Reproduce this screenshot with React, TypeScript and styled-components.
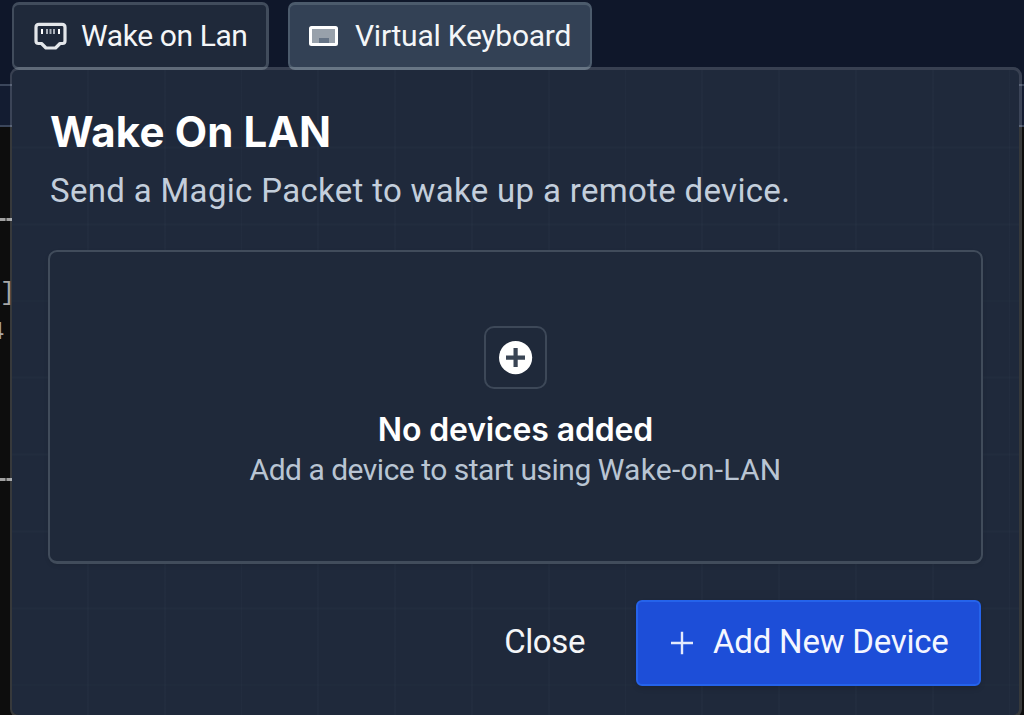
import React from "react";
import styled, { createGlobalStyle } from "styled-components";

const GlobalStyle = createGlobalStyle`
  * { box-sizing: border-box; }
  body { margin: 0; background: #0d0d0d; overflow: hidden; }
`;

const Screen = styled.main`
  position: relative;
  display: flex;
  flex-direction: column;
  width: 1024px;
  height: 715px;
  overflow: hidden;
  font-family: Roboto, "Liberation Sans", sans-serif;
  color: #fff;
`;

const Toolbar = styled.div`
  display: flex;
  align-items: flex-start;
  gap: 19px;
  height: 84px;
  padding: 2px 0 0 12px;
  background: #0f172a;
`;

const Tab = styled.button<{ $active?: boolean; $width: number; $gap: number; $spacing: number }>`
  display: flex;
  align-items: center;
  gap: ${(p) => p.$gap}px;
  width: ${(p) => p.$width}px;
  height: 68px;
  padding: 0 0 0 ${(p) => (p.$active ? 19 : 20)}px;
  border: 3px solid ${(p) => (p.$active ? "#4c5b6c" : "#414c5c")};
  border-width: 3px ${(p) => (p.$active ? 2 : 3)}px 3px 2px;
  border-radius: 7px;
  background: ${(p) => (p.$active ? "#334155" : "#1f293a")};
  color: #f4f6f8;
  font: 400 30px/36px Roboto, sans-serif;
  letter-spacing: ${(p) => p.$spacing}px;
  white-space: nowrap;
`;

const StatusStrip = styled.div`
  height: 43px;
  border: solid #3b465b;
  border-width: 2px 0;
  background: #131c31;
`;

const Terminal = styled.div`
  flex: 1;
  display: flex;
  flex-direction: column;
  padding-top: 91px;
  background: #0d0d0d;
  color: #a8a8a8;
  font-family: "Liberation Mono", monospace;
`;

const Rule = styled.div`
  width: 12px;
  height: 3px;
  background: repeating-linear-gradient(90deg, #a0a0a0 0 5px, #606060 5px 7px);
`;

const Output = styled.div<{ $height: number; $indent: number; $size: number }>`
  width: 12px;
  height: ${(p) => p.$height}px;
  overflow: hidden;
  white-space: nowrap;
  text-indent: ${(p) => p.$indent}px;
  font-size: ${(p) => p.$size}px;
  line-height: ${(p) => p.$height}px;
`;

const OutputBlock = styled.div`
  height: 257px;
  padding-top: 55px;
`;

const Popover = styled.section`
  position: absolute;
  left: 10px;
  top: 67px;
  width: 1012px;
  height: 651px;
  padding: 37px 36px 0 36px;
  border: solid rgba(203, 213, 225, 0.22);
  border-width: 3px 3px 3px 2px;
  border-radius: 9px;
  background:
    repeating-linear-gradient(90deg, transparent 0 75px, rgba(71, 85, 105, 0.07) 75px 76.8px) padding-box,
    repeating-linear-gradient(180deg, transparent 0 75px, rgba(71, 85, 105, 0.07) 75px 76.8px) 0 1.5px padding-box,
    #1f293b padding-box;
`;

const Title = styled.h1`
  margin: 0 0 14px 2px;
  font: 700 42px/50px Inter, sans-serif;
  letter-spacing: 0.15px;
`;

const Subtitle = styled.p`
  margin: 0 0 39px 2px;
  color: #c3cedb;
  font-size: 33px;
  line-height: 40px;
  letter-spacing: 0.32px;
`;

const Card = styled.div`
  display: flex;
  flex-direction: column;
  align-items: center;
  width: 935px;
  height: 314px;
  padding-top: 74px;
  border: solid #414c5b;
  border-width: 2px 2px 3px;
  border-radius: 9px;
  background: #1f293a;
  box-shadow: 0 2px 4px rgba(0, 0, 0, 0.08);
`;

const IconTile = styled.div`
  display: flex;
  align-items: center;
  justify-content: center;
  width: 63px;
  height: 63px;
  margin-bottom: 22px;
  border: 2.7px solid #3d4858;
  border-radius: 10px;
`;

const EmptyTitle = styled.h2`
  margin: 0 0 3px;
  font: 600 32px/38px Inter, sans-serif;
  letter-spacing: -0.15px;
`;

const EmptyText = styled.p`
  margin: 0;
  color: #b9c5d3;
  font-size: 30px;
  line-height: 36px;
  letter-spacing: -0.5px;
`;

const Term = styled.span`
  letter-spacing: 0.25px;
`;

const Footer = styled.div`
  display: flex;
  justify-content: flex-end;
  align-items: center;
  gap: 51px;
  width: 933px;
  margin-top: 36px;
`;

const TextButton = styled.button`
  padding: 0 0 2px;
  border: 0;
  background: none;
  color: #f4f6f8;
  font: 400 33px/40px Roboto, sans-serif;
  letter-spacing: -0.4px;
`;

const PrimaryButton = styled.button`
  display: flex;
  align-items: center;
  gap: 20px;
  width: 345px;
  height: 86px;
  padding: 0 0 0 33px;
  border: 2px solid #2563eb;
  border-radius: 6px;
  background: #1d4ed8;
  color: #f4f6ff;
  font: 400 33px/40px Roboto, sans-serif;
  letter-spacing: -0.22px;
  white-space: nowrap;
  box-shadow: 0 3px 5px rgba(0, 0, 0, 0.12);
`;

const ButtonLabel = styled.span`
  padding-bottom: 2px;
`;

const PortIcon = () => (
  <svg width="33" height="28" viewBox="34 22 33 28" fill="none">
    <path
      d="M39 24.3H62Q65 24.3 65 27.3V41Q65 43.5 62.5 43.5H60L55.5 48H46L41.5 43.5H38.5Q36 43.5 36 41V27.3Q36 24.3 39 24.3Z"
      stroke="#e3e6ea"
      strokeWidth="3.2"
      strokeLinejoin="round"
    />
    <path d="M42 29v5M59 29v5" stroke="#fff" strokeWidth="2" />
    <path d="M47 29v5M50.5 29v5M54 29v5" stroke="#aab1ba" strokeWidth="2" />
  </svg>
);

const KeyboardIcon = () => (
  <svg width="29" height="20" viewBox="0 0 29 20">
    <rect x="1.5" y="1.5" width="26" height="17" rx="1" fill="#98a1ab" stroke="#fff" strokeWidth="3" />
    <rect x="10" y="12" width="10" height="5" fill="#667486" />
  </svg>
);

const PlusCircle = () => (
  <svg width="34" height="34" viewBox="0 0 34 34">
    <circle cx="16.6" cy="16.6" r="16.6" fill="#fff" />
    <path d="M16.6 7v19M7 16.6h19" stroke="#394454" strokeWidth="4.2" />
  </svg>
);

const PlusIcon = () => (
  <svg width="22" height="24" viewBox="0 0 22 24">
    <path d="M11 .8v22.4M0 12h22" stroke="#e4eafc" strokeWidth="2.4" />
  </svg>
);

export default function App() {
  return (
    <Screen>
      <GlobalStyle />
      <Toolbar>
        <Tab $width={257} $gap={14} $spacing={-0.4}>
          <PortIcon />
          Wake on Lan
        </Tab>
        <Tab $active $width={304} $gap={17} $spacing={-0.25}>
          <KeyboardIcon />
          Virtual Keyboard
        </Tab>
      </Toolbar>
      <StatusStrip />
      <Terminal>
        <Rule />
        <OutputBlock>
          <Output $height={36} $indent={0} $size={25}>]</Output>
          <Output $height={40} $indent={-11} $size={26}>4</Output>
        </OutputBlock>
        <Rule />
      </Terminal>
      <Popover>
        <Title>Wake On LAN</Title>
        <Subtitle>Send a Magic Packet to wake up a remote device.</Subtitle>
        <Card>
          <IconTile>
            <PlusCircle />
          </IconTile>
          <EmptyTitle>No devices added</EmptyTitle>
          <EmptyText>
            Add a device to start using <Term>Wake-on-LAN</Term>
          </EmptyText>
        </Card>
        <Footer>
          <TextButton>Close</TextButton>
          <PrimaryButton>
            <PlusIcon />
            <ButtonLabel>Add New Device</ButtonLabel>
          </PrimaryButton>
        </Footer>
      </Popover>
    </Screen>
  );
}
